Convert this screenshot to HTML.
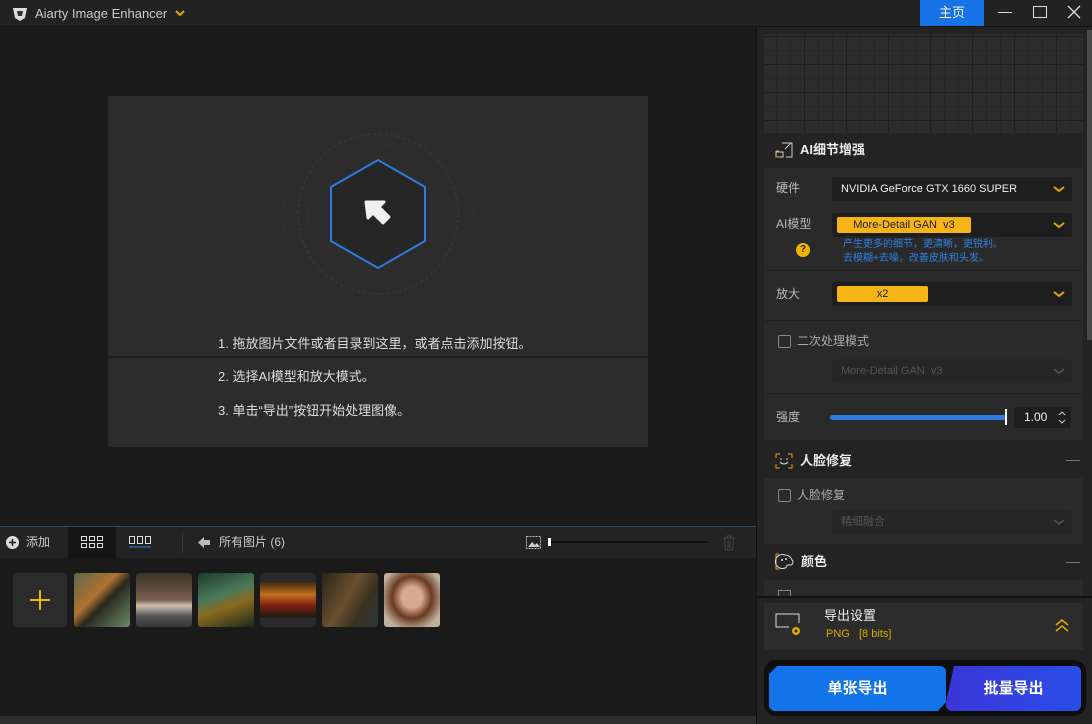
<!DOCTYPE html>
<html><head><meta charset="utf-8"><style>
*{box-sizing:border-box;margin:0;padding:0}
body{width:1092px;height:724px;overflow:hidden;background:#1a1a1a;font-family:"Liberation Sans","Noto Sans CJK SC",sans-serif;font-size:12px;line-height:1.15;color:#ccc;position:relative}
.a{position:absolute}
.sel{position:absolute;background:#1e1e1e;border-radius:3px;height:24px}
.chev{position:absolute;right:6px;top:5px;width:14px;height:14px}
.cb{position:absolute;width:13px;height:13px;border:1px solid #888;border-radius:2px}
</style></head><body>
<div class="a" style="left:0;top:0;width:1092px;height:27px;background:#222;border-bottom:1px solid #111"></div>
<svg class="a" style="left:11px;top:6px" width="18" height="16" viewBox="0 0 18 16"><path d="M2 2h14l-2 10-5 3-5-3z" fill="#ddd"/><path d="M6 5h6l-1 5H7z" fill="#333"/></svg>
<div class="a" style="left:35px;top:7px;font-size:13px;color:#ccc">Aiarty Image Enhancer</div>
<svg class="a" style="left:175px;top:10px" width="10" height="7"><path d="M1 1l4 4 4-4" stroke="#e0a800" stroke-width="2" fill="none"/></svg>
<div class="a" style="left:920px;top:0;width:64px;height:26px;background:#1673e6;color:#fff;text-align:center;line-height:26px;font-size:13px">主页</div>
<div class="a" style="left:998px;top:12px;width:14px;height:1px;background:#ddd"></div>
<div class="a" style="left:1033px;top:6px;width:14px;height:12px;border:1px solid #ddd"></div>
<svg class="a" style="left:1067px;top:5px" width="14" height="14"><path d="M1 1l12 12M13 1L1 13" stroke="#ddd" stroke-width="1.3"/></svg>
<div class="a" style="left:108px;top:96px;width:540px;height:351px;background:#2c2c2c;border-radius:2px"></div>
<div class="a" style="left:108px;top:356px;width:540px;height:2px;background:#1f1f1f"></div>
<svg class="a" style="left:280px;top:120px" width="200" height="200" viewBox="0 0 200 200">
<circle cx="98" cy="94" r="95" fill="none" stroke="#303030" stroke-width="1"/>
<circle cx="98" cy="94" r="80" fill="none" stroke="#343434" stroke-width="2" stroke-dasharray="3 3"/>
<circle cx="98" cy="94" r="70" fill="none" stroke="#303030" stroke-width="1"/>
<polygon points="98,40 145,67 145,121 98,148 51,121 51,67" fill="#262626" stroke="#2f7be0" stroke-width="2"/>
<path d="M86 82h18l-5 5 10 10-6 6-10-10-5 5z" fill="#f0f0f0" stroke="#f0f0f0" stroke-width="3" stroke-linejoin="round"/>
</svg>
<div class="a" style="left:218px;top:337px;font-size:13px;color:#ddd">1. 拖放图片文件或者目录到这里，或者点击添加按钮。</div>
<div class="a" style="left:218px;top:370px;font-size:13px;color:#ddd">2. 选择AI模型和放大模式。</div>
<div class="a" style="left:218px;top:404px;font-size:13px;color:#ddd">3. 单击“导出”按钮开始处理图像。</div>
<div class="a" style="left:0;top:526px;width:756px;height:1px;background:#2b4a66"></div>
<div class="a" style="left:0;top:527px;width:756px;height:31px;background:#232323"></div>
<div class="a" style="left:68px;top:527px;width:48px;height:31px;background:#161616"></div>
<svg class="a" style="left:6px;top:536px" width="13" height="13"><circle cx="6.5" cy="6.5" r="6.5" fill="#ddd"/><path d="M6.5 3v7M3 6.5h7" stroke="#232323" stroke-width="1.6"/></svg>
<div class="a" style="left:26px;top:536px;color:#ccc">添加</div>
<svg class="a" style="left:81px;top:536px" width="22" height="12"><g fill="none" stroke="#ddd"><rect x=".5" y=".5" width="5" height="4"/><rect x="8.5" y=".5" width="5" height="4"/><rect x="16.5" y=".5" width="5" height="4"/><rect x=".5" y="7.5" width="5" height="4"/><rect x="8.5" y="7.5" width="5" height="4"/><rect x="16.5" y="7.5" width="5" height="4"/></g></svg>
<svg class="a" style="left:129px;top:536px" width="22" height="12"><g fill="none" stroke="#ddd"><rect x=".5" y=".5" width="5" height="7"/><rect x="8.5" y=".5" width="5" height="7"/><rect x="16.5" y=".5" width="5" height="7"/></g><path d="M0 11h22" stroke="#2f7be0"/></svg>
<div class="a" style="left:182px;top:533px;width:1px;height:20px;background:#383838"></div>
<svg class="a" style="left:198px;top:537px" width="12" height="11"><path d="M0 5.5L6 0v3h6v5H6v3z" fill="#bbb"/></svg>
<div class="a" style="left:219px;top:536px;color:#ccc">所有图片 (6)</div>
<svg class="a" style="left:526px;top:536px" width="15" height="13"><rect x=".5" y=".5" width="14" height="12" fill="none" stroke="#bbb" stroke-dasharray="2 1"/><path d="M2 11l4-5 3 3 2-2 3 4z" fill="#ccc"/></svg>
<div class="a" style="left:548px;top:538px;width:3px;height:8px;background:#fff"></div>
<div class="a" style="left:551px;top:541px;width:157px;height:2px;background:#0f0f0f"></div>
<svg class="a" style="left:722px;top:535px" width="14" height="16"><path d="M1 3h12M5 3V1h4v2M2.5 3l1 12h7l1-12M6 6v7M8 6v7" stroke="#444" fill="none"/></svg>
<div class="a" style="left:13px;top:573px;width:54px;height:54px;background:#2b2b2b;border-radius:3px"></div>
<svg class="a" style="left:29px;top:589px" width="22" height="22"><path d="M11 1v20M1 11h20" stroke="#f0b400" stroke-width="2"/></svg>
<div class="a" style="left:74px;top:573px;width:56px;height:54px;border-radius:3px;background:linear-gradient(135deg,#5a6a4a,#b07030 40%,#2a2a20 55%,#6a8a6a)"></div>
<div class="a" style="left:136px;top:573px;width:56px;height:54px;border-radius:3px;background:linear-gradient(#3a3228,#7a6050 50%,#d0c0b0 60%,#555 80%,#333)"></div>
<div class="a" style="left:198px;top:573px;width:56px;height:54px;border-radius:3px;background:linear-gradient(160deg,#1e3a2a,#4a7a5a 40%,#8a6a20 60%,#1a2a1a)"></div>
<div class="a" style="left:260px;top:573px;width:56px;height:54px;border-radius:3px;background:linear-gradient(#2b2b2b 0 18%,#4a2a10 18%,#c07020 40%,#802010 60%,#1a1a10 82%,#2b2b2b 82%)"></div>
<div class="a" style="left:322px;top:573px;width:56px;height:54px;border-radius:3px;background:linear-gradient(120deg,#2a2418,#6a5030 45%,#3a3020 70%,#2a3a3a)"></div>
<div class="a" style="left:384px;top:573px;width:56px;height:54px;border-radius:3px;background:radial-gradient(ellipse at 50% 45%,#d8a890 25%,#6a3a20 50%,#c0b0a0 80%)"></div>
<div class="a" style="left:0;top:716px;width:756px;height:8px;background:#2e2e2e"></div>
<div class="a" style="left:756px;top:27px;width:336px;height:697px;background:#232323;border-left:1px solid #111"></div>
<div class="a" style="left:764px;top:34px;width:319px;height:99px;background-color:#2c2c2c;background-image:linear-gradient(#1e1e1e 1px,transparent 1px),linear-gradient(90deg,#1e1e1e 1px,transparent 1px),linear-gradient(#262626 1px,transparent 1px),linear-gradient(90deg,#262626 1px,transparent 1px);background-size:42px 28px,42px 28px,14px 14px,14px 14px;background-position:-2px 2px"></div>
<div class="a" style="left:1087px;top:30px;width:5px;height:310px;background:#4a4a4a"></div>
<svg class="a" style="left:775px;top:142px" width="18" height="16"><path d="M1 9v6h7v-5H1M7 1h10v14H11" fill="none" stroke="#ccc"/><path d="M10 7l6-6M12 1h5v5" stroke="#ccc" fill="none"/><path d="M1 9h3M1 15h3" stroke="#e0a800"/></svg>
<div class="a" style="left:800px;top:143px;font-size:13px;font-weight:bold;color:#eee">AI细节增强</div>
<div class="a" style="left:764px;top:168px;width:319px;height:272px;background:#2a2a2a"></div>
<div class="a" style="left:764px;top:270px;width:319px;height:1px;background:#222"></div>
<div class="a" style="left:764px;top:320px;width:319px;height:1px;background:#222"></div>
<div class="a" style="left:764px;top:393px;width:319px;height:1px;background:#222"></div>
<div class="a" style="left:776px;top:182px;color:#bbb">硬件</div>
<div class="sel" style="left:832px;top:177px;width:240px"><span class="a" style="left:9px;top:6px;font-size:11px;color:#eee">NVIDIA GeForce GTX 1660 SUPER</span><svg class="chev" viewBox="0 0 14 14"><path d="M2 5l5 4 5-4" stroke="#e0a800" stroke-width="2" fill="none"/></svg></div>
<div class="a" style="left:776px;top:218px;color:#bbb">AI模型</div>
<div class="sel" style="left:832px;top:213px;width:240px"><span class="a" style="left:5px;top:4px;width:134px;height:16px;background:#f6b417;border-radius:2px;color:#222;text-align:center;font-size:11px;line-height:16px">More-Detail GAN&nbsp; v3</span><svg class="chev" viewBox="0 0 14 14"><path d="M2 5l5 4 5-4" stroke="#e0a800" stroke-width="2" fill="none"/></svg></div>
<div class="a" style="left:796px;top:243px;width:14px;height:14px;border-radius:7px;background:#f0b400;color:#222;font-size:10px;font-weight:bold;text-align:center;line-height:14px">?</div>
<div class="a" style="left:843px;top:238px;font-size:10px;color:#2f80e0;line-height:14px">产生更多的细节，更清晰，更锐利。<br>去模糊+去噪，改善皮肤和头发。</div>
<div class="a" style="left:776px;top:288px;color:#bbb">放大</div>
<div class="sel" style="left:832px;top:282px;width:240px"><span class="a" style="left:5px;top:4px;width:91px;height:16px;background:#f6b417;border-radius:2px;color:#222;text-align:center;font-size:11px;line-height:16px">x2</span><svg class="chev" viewBox="0 0 14 14"><path d="M2 5l5 4 5-4" stroke="#e0a800" stroke-width="2" fill="none"/></svg></div>
<div class="cb" style="left:778px;top:335px"></div>
<div class="a" style="left:797px;top:335px;color:#aaa">二次处理模式</div>
<div class="sel" style="left:832px;top:359px;width:240px;background:#262626"><span class="a" style="left:9px;top:6px;font-size:11px;color:#555">More-Detail GAN&nbsp; v3</span><svg class="chev" viewBox="0 0 14 14"><path d="M2 5l5 4 5-4" stroke="#555" stroke-width="1.5" fill="none"/></svg></div>
<div class="a" style="left:776px;top:411px;color:#bbb">强度</div>
<div class="a" style="left:830px;top:415px;width:176px;height:5px;background:#2f7be0;border-radius:3px"></div>
<div class="a" style="left:1005px;top:409px;width:2px;height:16px;background:#fff"></div>
<div class="a" style="left:1014px;top:407px;width:57px;height:21px;background:#1e1e1e;border-radius:2px"><span class="a" style="left:10px;top:4px;color:#eee">1.00</span><svg class="a" style="left:43px;top:3px" width="10" height="15"><path d="M2 5l3-3 3 3M2 10l3 3 3-3" stroke="#ccc" fill="none"/></svg></div>
<svg class="a" style="left:775px;top:453px" width="18" height="16"><path d="M1 5V1h4M13 1h4v4M17 11v4h-4M5 15H1v-4" stroke="#e0a800" fill="none"/><path d="M6 5v2M12 5v2M5 9q4 4 8 0" stroke="#ddd" fill="none"/></svg>
<div class="a" style="left:800px;top:454px;font-size:13px;font-weight:bold;color:#eee">人脸修复</div>
<div class="a" style="left:1066px;top:460px;width:14px;height:1px;background:#777"></div>
<div class="a" style="left:764px;top:478px;width:319px;height:66px;background:#2a2a2a"></div>
<div class="cb" style="left:778px;top:489px"></div>
<div class="a" style="left:797px;top:489px;color:#aaa">人脸修复</div>
<div class="sel" style="left:832px;top:510px;width:240px;background:#262626"><span class="a" style="left:9px;top:6px;font-size:11px;color:#555">精细融合</span><svg class="chev" viewBox="0 0 14 14"><path d="M2 5l5 4 5-4" stroke="#555" stroke-width="1.5" fill="none"/></svg></div>
<svg class="a" style="left:775px;top:553px" width="20" height="17"><path d="M1 1h3M1 1v15h3" stroke="#e0a800" fill="none"/><path d="M10 2a7 7 0 1 0 0 13c2 0 1-3 3-3h3a3 3 0 0 0 1-5A7 7 0 0 0 10 2z" stroke="#ddd" fill="none"/><circle cx="7" cy="7" r="1" fill="#ddd"/><circle cx="11" cy="6" r="1" fill="#ddd"/></svg>
<div class="a" style="left:801px;top:555px;font-size:13px;font-weight:bold;color:#eee">颜色</div>
<div class="a" style="left:1066px;top:562px;width:14px;height:1px;background:#777"></div>
<div class="a" style="left:764px;top:580px;width:319px;height:16px;background:#2a2a2a"></div>
<div class="a" style="left:778px;top:590px;width:13px;height:6px;border:1px solid #888;border-bottom:none"></div>
<div class="a" style="left:756px;top:596px;width:336px;height:2px;background:#111"></div>
<div class="a" style="left:757px;top:598px;width:335px;height:126px;background:#232323"></div>
<div class="a" style="left:764px;top:603px;width:319px;height:47px;background:#2c2c2c"></div>
<svg class="a" style="left:775px;top:613px" width="30" height="27"><path d="M14 14H1V1h23v9M1 14l4 0" stroke="#ddd" fill="none"/><circle cx="21" cy="18" r="4" fill="#e0a800"/><circle cx="21" cy="18" r="1.5" fill="#2c2c2c"/></svg>
<div class="a" style="left:824px;top:609px;font-size:13px;color:#eee">导出设置</div>
<div class="a" style="left:826px;top:628px;font-size:11px;color:#e0a800">PNG&nbsp;&nbsp; [8 bits]</div>
<svg class="a" style="left:1054px;top:618px" width="16" height="14"><path d="M2 7l6-5 6 5M2 13l6-5 6 5" stroke="#e0a800" stroke-width="1.6" fill="none"/></svg>
<div class="a" style="left:764px;top:660px;width:322px;height:56px;background:#0e0e0e;border-radius:12px"></div>
<div class="a" style="left:769px;top:666px;width:177px;height:45px;background:#1373e8;clip-path:polygon(8px 0,100% 0,100% 36px,calc(100% - 8px) 100%,0 100%,0 8px);border-radius:6px;color:#fff;font-size:15px;font-weight:bold;text-align:center;line-height:45px">单张导出</div>
<div class="a" style="left:946px;top:666px;width:135px;height:45px;background:linear-gradient(90deg,#3a36d8,#2a4ee8);clip-path:polygon(8px 0,100% 0,100% 100%,0 100%,0 36px);border-radius:6px;color:#fff;font-size:15px;font-weight:bold;text-align:center;line-height:45px">批量导出</div>
</body></html>
